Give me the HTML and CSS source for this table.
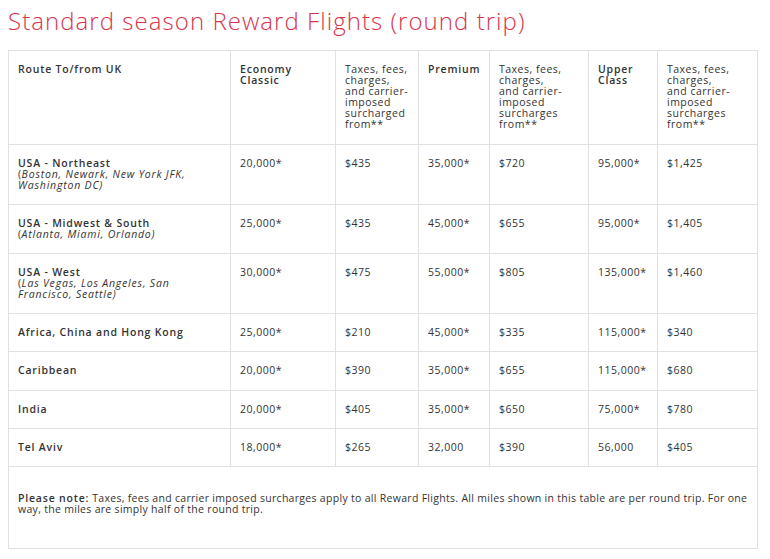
FILE: index.html
```html
<!DOCTYPE html>
<html>
<head>
<meta charset="utf-8">
<link rel="stylesheet" href="styles.css">
</head>
<body>
<div class="page">
  <h1 class="title">Standard season Reward Flights (round trip)</h1>
  <table class="fares">
    <colgroup>
      <col class="c-route"><col class="c-eco"><col class="c-tax1"><col class="c-prem"><col class="c-tax2"><col class="c-upper"><col class="c-tax3">
    </colgroup>
    <thead>
      <tr>
        <th class="strong">Route To/from UK</th>
        <th class="strong">Economy<br>Classic</th>
        <th>Taxes, fees,<br>charges,<br>and carrier-<br>imposed<br>surcharged<br>from**</th>
        <th class="strong">Premium</th>
        <th>Taxes, fees,<br>charges,<br>and carrier-<br>imposed<br>surcharges<br>from**</th>
        <th class="strong">Upper<br>Class</th>
        <th>Taxes, fees,<br>charges,<br>and carrier-<br>imposed<br>surcharges<br>from**</th>
      </tr>
    </thead>
    <tbody>
      <tr>
        <td><span class="strong">USA - Northeast</span><br><span class="sub">(<i>Boston, Newark, New York JFK, Washington DC)</i></span></td>
        <td>20,000*</td><td>$435</td><td>35,000*</td><td>$720</td><td>95,000*</td><td>$1,425</td>
      </tr>
      <tr>
        <td><span class="strong">USA - Midwest &amp; South</span><br><span class="sub">(<i>Atlanta, Miami, Orlando)</i></span></td>
        <td>25,000*</td><td>$435</td><td>45,000*</td><td>$655</td><td>95,000*</td><td>$1,405</td>
      </tr>
      <tr>
        <td><span class="strong">USA - West</span><br><span class="sub">(<i>Las Vegas, Los Angeles, San Francisco, Seattle)</i></span></td>
        <td>30,000*</td><td>$475</td><td>55,000*</td><td>$805</td><td>135,000*</td><td>$1,460</td>
      </tr>
      <tr>
        <td><span class="strong">Africa, China and Hong Kong</span></td>
        <td>25,000*</td><td>$210</td><td>45,000*</td><td>$335</td><td>115,000*</td><td>$340</td>
      </tr>
      <tr>
        <td><span class="strong">Caribbean</span></td>
        <td>20,000*</td><td>$390</td><td>35,000*</td><td>$655</td><td>115,000*</td><td>$680</td>
      </tr>
      <tr>
        <td><span class="strong">India</span></td>
        <td>20,000*</td><td>$405</td><td>35,000*</td><td>$650</td><td>75,000*</td><td>$780</td>
      </tr>
      <tr>
        <td><span class="strong">Tel Aviv</span></td>
        <td>18,000*</td><td>$265</td><td>32,000</td><td>$390</td><td>56,000</td><td>$405</td>
      </tr>
      <tr>
        <td class="note" colspan="7"><span class="strong">Please note:</span> Taxes, fees and carrier imposed surcharges apply to all Reward Flights. All miles shown in this table are per round trip. For one way, the miles are simply half of the round trip.</td>
      </tr>
    </tbody>
  </table>
</div>
</body>
</html>
```

FILE: styles.css
```css
html, body {
  margin: 0;
  padding: 0;
  background: #ffffff;
}

.page {
  padding: 6px 13px 0 8px;
  font-family: "Open Sans", "DejaVu Sans", sans-serif;
  color: #333333;
}

.title {
  margin: 0 0 14px 0;
  font-size: 24px;
  line-height: 30px;
  font-weight: 300;
  color: #d9344c;
  letter-spacing: 1.05px;
}

.fares {
  width: 749px;
  border-collapse: collapse;
  table-layout: fixed;
  font-size: 10.5px;
  line-height: 11.1px;
  letter-spacing: 0.5px;
}

.c-route { width: 222px; }
.c-eco { width: 105px; }
.c-tax1 { width: 83px; }
.c-prem { width: 71px; }
.c-tax2 { width: 99px; }
.c-upper { width: 69px; }
.c-tax3 { width: 100px; }

.fares th,
.fares td {
  border: 1px solid #e1e1e1;
  padding: 13px 9px 13px 9px;
  text-align: left;
  vertical-align: top;
  font-weight: 400;
}

.strong {
  font-weight: 600;
  letter-spacing: 0.8px;
}

.fares th.strong {
  font-weight: 600;
}

.sub i {
  font-style: italic;
  letter-spacing: 0.8px;
}

.fares td.note {
  padding: 26px 9px 33px 9px;
  letter-spacing: 0.3px;
}
```
